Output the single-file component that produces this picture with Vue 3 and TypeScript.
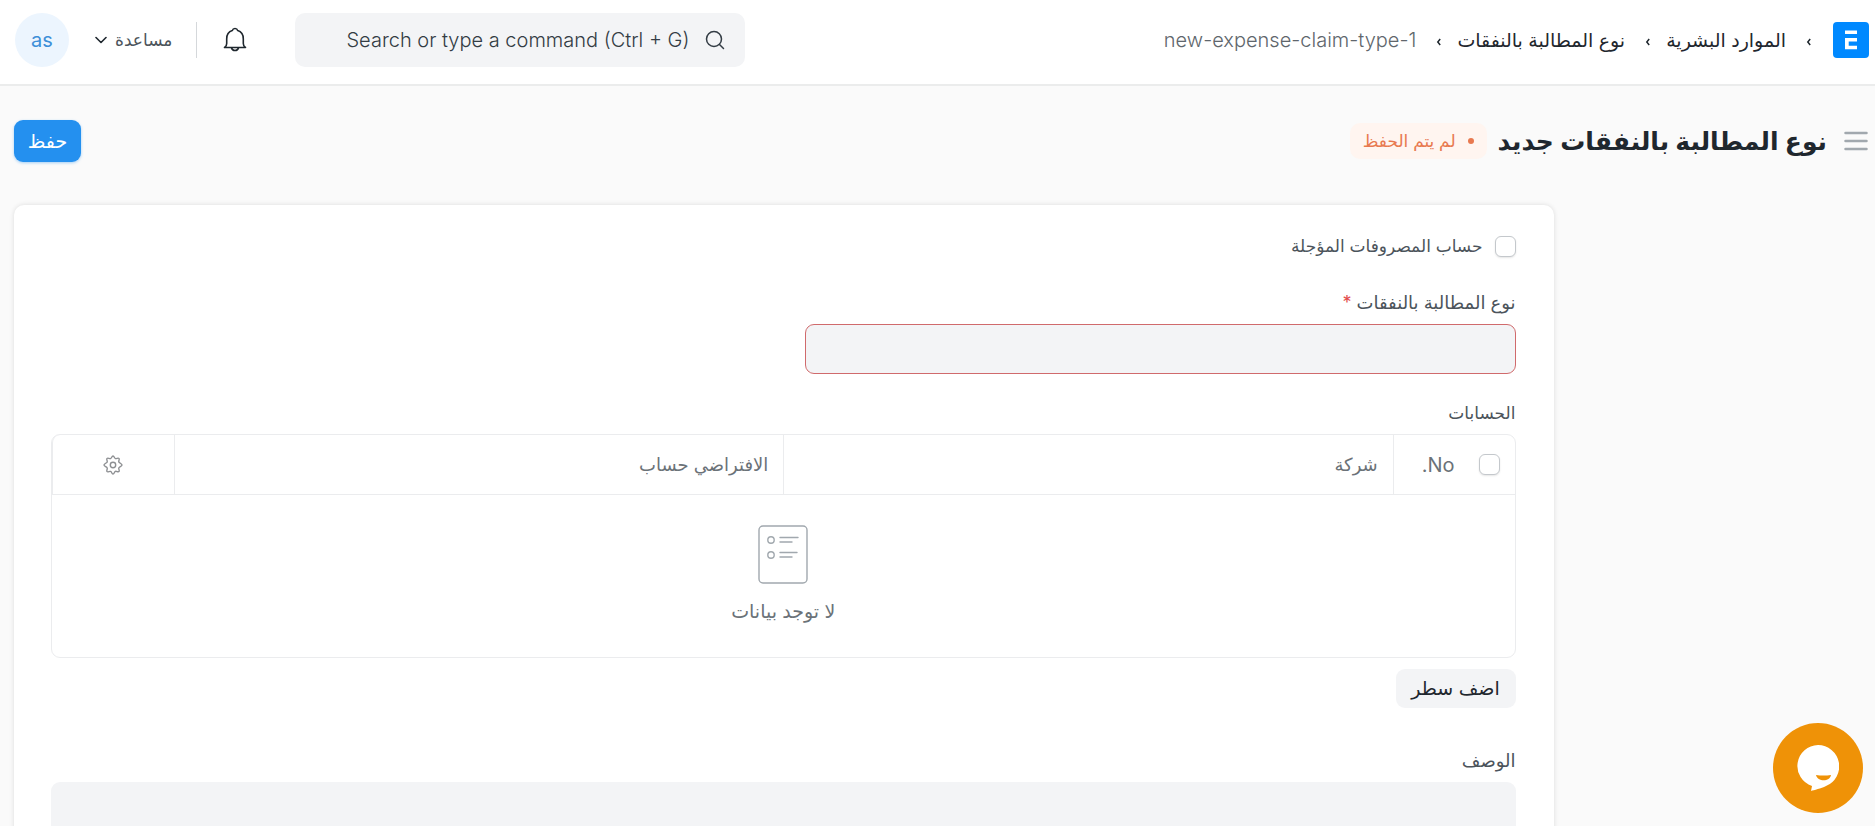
<script setup lang="ts">
import { ref } from 'vue'

interface Crumb {
  label: string
  current?: boolean
}

const crumbs: Crumb[] = [
  { label: 'الموارد البشرية' },
  { label: 'نوع المطالبة بالنفقات' },
  { label: 'new-expense-claim-type-1', current: true },
]

const search = ref('')
const deferred = ref(false)
const expenseType = ref('')
const allRows = ref(false)
const description = ref('')
</script>

<template>
  <div class="page" dir="rtl" lang="ar">
    <header class="navbar">
      <a class="logo" href="#" aria-label="ERPNext">
        <svg viewBox="0 0 36 36" width="36" height="36" aria-hidden="true">
          <rect width="36" height="36" rx="4" fill="#0089ff" />
          <path d="M12 8.500h12v3.500H12zM12 16h12v3.500h-8.300v4.200H24v3.500H12z" fill="#fff" />
        </svg>
      </a>
      <nav class="crumbs">
        <template v-for="crumb in crumbs" :key="crumb.label">
          <svg class="sep" viewBox="0 0 6 8" width="6" height="8" aria-hidden="true">
            <path d="M4.200 1 1.800 4l2.400 3" fill="none" stroke="#1f272e" stroke-width="1.500" />
          </svg>
          <a href="#" :class="{ current: crumb.current }">{{ crumb.label }}</a>
        </template>
      </nav>
      <div class="tools">
        <label class="search">
          <svg viewBox="0 0 20 20" width="20" height="20" aria-hidden="true">
            <g fill="none" stroke="#333c44" stroke-width="1.500">
              <circle cx="9" cy="9" r="7.500" />
              <path d="m14.500 14.500 4 4" stroke-linecap="round" />
            </g>
          </svg>
          <input v-model="search" type="text" placeholder="Search or type a command (Ctrl + G)" aria-label="Search" />
        </label>
        <button class="bell" type="button" aria-label="الإشعارات">
          <svg viewBox="0 0 24 26" width="24" height="26" aria-hidden="true">
            <g fill="none" stroke="#1f272e" stroke-width="1.600" stroke-linecap="round" stroke-linejoin="round">
              <path d="M1.500 20.500h21c-1.500-.8-2.200-2-2.200-4v-4.600c0-4-2.300-7.300-5.600-8.300a2.800 2.800 0 0 0-5.400 0c-3.300 1-5.600 4.300-5.600 8.300v4.600c0 2-.7 3.200-2.200 4z" />
              <path d="M8.500 20.800a3.600 3.600 0 0 0 7 0" />
            </g>
          </svg>
        </button>
        <span class="divider"></span>
        <button class="help" type="button">
          <span>مساعدة</span>
          <svg viewBox="0 0 12 8" width="12" height="8" aria-hidden="true">
            <path d="m1 1.500 5 5 5-5" fill="none" stroke="#1f272e" stroke-width="1.600" stroke-linecap="round" stroke-linejoin="round" />
          </svg>
        </button>
        <button class="avatar" type="button">as</button>
      </div>
    </header>

    <div class="head">
      <button class="menu" type="button" aria-label="القائمة">
        <svg viewBox="0 0 24 20" width="24" height="20" aria-hidden="true">
          <path d="M1.500 2h21M1.500 10h21M1.500 18h21" stroke="#a1a8ae" stroke-width="2.500" stroke-linecap="round" />
        </svg>
      </button>
      <h1>نوع المطالبة بالنفقات جديد</h1>
      <span class="status"><i class="dot"></i>لم يتم الحفظ</span>
      <button class="save" type="button">حفظ</button>
    </div>

    <main class="card">
      <label class="check">
        <input v-model="deferred" type="checkbox" />
        <span>حساب المصروفات المؤجلة</span>
      </label>

      <div class="field half">
        <label for="expense-type">نوع المطالبة بالنفقات <span class="req">*</span></label>
        <input id="expense-type" v-model="expenseType" type="text" required />
      </div>

      <section class="field accounts">
        <span id="accounts-label" class="caption">الحسابات</span>
        <div class="grid">
          <table aria-labelledby="accounts-label">
            <thead>
              <tr>
                <th class="narrow">
                  <div class="num">
                    <input v-model="allRows" type="checkbox" aria-label="تحديد الكل" />
                    <span>No.</span>
                  </div>
                </th>
                <th>شركة</th>
                <th>الافتراضي حساب</th>
                <th class="narrow gear">
                  <button type="button" aria-label="إعدادات">
                    <svg viewBox="0 0 20 20" width="20" height="20" aria-hidden="true">
                      <g fill="none" stroke="#8d8f92" stroke-width="1.400" stroke-linejoin="round">
                        <circle cx="10" cy="10" r="2.700" />
                        <path d="M10 1c1.200 0 1.300 2.200 2.400 2.600s2.700-1.100 3.600-.2-.7 2.400-.2 3.500S19 8.800 19 10s-2.800 1.900-3.200 3 1.100 2.600.2 3.500-2.500-.6-3.600-.1S11.200 19 10 19s-1.300-2.200-2.400-2.600-2.700 1.100-3.600.2.700-2.500.2-3.600S1 11.200 1 10s2.800-2 3.200-3.100S3.100 4.300 4 3.400s2.500.6 3.600.2S8.800 1 10 1z" />
                      </g>
                    </svg>
                  </button>
                </th>
              </tr>
            </thead>
          </table>
          <div class="empty">
            <svg viewBox="0 0 50 60" width="50" height="60" aria-hidden="true">
              <g fill="none" stroke="#a1a8ae" stroke-width="1.400" stroke-linecap="round">
                <rect x="1" y="1" width="48" height="57" rx="4" />
                <circle cx="13" cy="15" r="3.200" />
                <circle cx="13" cy="30" r="3.200" />
                <path d="M22 12.500h18M22 17h12M22 27.500h17M22 32h12" />
              </g>
            </svg>
            <span>لا توجد بيانات</span>
          </div>
        </div>
        <button class="add" type="button">اضف سطر</button>
      </section>

      <div class="field">
        <label for="description">الوصف</label>
        <textarea id="description" v-model="description"></textarea>
      </div>
    </main>

    <button class="chat" type="button" aria-label="محادثة">
      <svg viewBox="0 0 42 46" width="42" height="46" aria-hidden="true">
        <path d="M21 0a21 21 0 0 0-6 41l-1 5c3-1 10-2.500 15-5A21.300 21.300 0 0 0 21 0z" fill="#fff" />
        <path d="M19 30q7.500 1 15 0c-1 7-13.500 7-15 0z" fill="#ef9207" />
      </svg>
    </button>
  </div>
</template>

<style>
html {
  background: #fafafa;
  scrollbar-width: none;
}
</style>

<style scoped>
.page,
.page * {
  box-sizing: border-box;
}

.page {
  min-height: 100vh;
  background: #fafafa;
  color: #1f272e;
  font-family: Inter, "DejaVu Sans", sans-serif;
  font-size: 17px;
}

button,
input,
textarea {
  font: inherit;
  color: inherit;
}

button {
  display: flex;
  align-items: center;
  justify-content: center;
  padding: 0;
  border: 0;
  background: none;
}

a {
  color: inherit;
  text-decoration: none;
}

svg {
  flex: none;
  display: block;
}

.navbar {
  display: flex;
  align-items: center;
  height: 86px;
  padding-bottom: 4px;
  padding-inline: 6px 15px;
  background: #fff;
  border-bottom: 2px solid #ebecec;
}

.crumbs {
  display: flex;
  align-items: center;
  margin-inline-start: 6px;
  font-size: 19px;
}

.sep {
  margin: 4px 15px 0 20px;
}

.crumbs .current {
  font-size: 20px;
  font-weight: 300;
  color: #60666c;
}

.tools {
  display: flex;
  align-items: center;
  margin-inline-start: auto;
}

.search {
  display: flex;
  align-items: center;
  gap: 16px;
  width: 450px;
  height: 54px;
  padding: 0 20px;
  border-radius: 10px;
  background: #f3f4f6;
}

.search input {
  flex: 1;
  min-width: 0;
  padding: 0;
  border: 0;
  outline: 0;
  background: none;
  font-size: 20px;
  font-weight: 300;
}

.search input::placeholder {
  color: #333c44;
  opacity: 1;
}

.bell {
  margin-inline: 48px 26px;
}

.divider {
  width: 1px;
  height: 36px;
  background: #d5d8db;
}

.help {
  gap: 8px;
  margin-inline: 24px 26px;
  color: #4c545b;
}

.avatar {
  width: 54px;
  height: 54px;
  border-radius: 50%;
  background: #ecf5fe;
  color: #3d8fd8;
  font-size: 20px;
}

.head {
  display: flex;
  align-items: center;
  height: 110px;
  padding-inline: 7px 14px;
}

h1 {
  margin: 0;
  margin-inline: 17px 11px;
  font-size: 25px;
  font-weight: 600;
  line-height: 40px;
}

.status {
  display: flex;
  align-items: center;
  gap: 12px;
  height: 36px;
  padding: 0 13px;
  border-radius: 10px;
  background: #fff5f0;
  color: #e8794f;
}

.dot {
  width: 6px;
  height: 6px;
  border-radius: 50%;
  background: currentColor;
}

.save {
  width: 67px;
  height: 42px;
  margin-inline-start: auto;
  border-radius: 9px;
  background: #2490ef;
  box-shadow: 0 1px 3px rgba(36, 144, 239, 0.4);
  color: #fff;
  font-size: 19px;
}

.card {
  width: calc(82% + 2px);
  margin-top: 9px;
  margin-inline: auto 14px;
  padding-block: 30px;
  padding-inline: 38px 37px;
  border-radius: 10px;
  background: #fff;
  box-shadow: 0 0 5px rgba(0, 0, 0, 0.12);
}

.check {
  display: flex;
  align-items: center;
  gap: 12px;
  height: 22px;
  margin-bottom: 34px;
  color: #4c545b;
}

input[type='checkbox'] {
  appearance: none;
  flex: none;
  width: 21px;
  height: 21px;
  margin: 0;
  border: 1px solid #c4c8cc;
  border-radius: 6px;
  background: #fff;
  box-shadow: 0 1px 2px rgba(0, 0, 0, 0.1);
}

.field {
  display: flex;
  flex-direction: column;
}

.field > label,
.caption {
  height: 33px;
  line-height: 24px;
  color: #4c545b;
}

.field > label {
  font-size: 18px;
}

.req {
  color: #e24c4c;
}

.half {
  width: calc(50% - 22px);
  margin-bottom: 27px;
}

.half input {
  height: 50px;
  padding: 0 12px;
  border: 1px solid #d06a6c;
  border-radius: 9px;
  background: #f3f4f6;
}

.accounts {
  margin-bottom: 41px;
}

.grid {
  margin-bottom: 11px;
  border: 1px solid #ebecee;
  border-radius: 9px;
}

table {
  width: 100%;
  table-layout: fixed;
  border-collapse: separate;
  border-spacing: 0;
}

th {
  height: 60px;
  padding: 0 15px;
  border-bottom: 1px solid #ebecee;
  border-left: 1px solid #ebecee;
  color: #6b7278;
  font-size: 18px;
  font-weight: 400;
  text-align: start;
}

.narrow {
  width: 8.333%;
}

.gear {
  border-top-left-radius: 8px;
}

.num {
  display: flex;
  align-items: center;
  gap: 24px;
  font-size: 20px;
}

.gear button {
  margin: auto;
}

.empty {
  display: flex;
  flex-direction: column;
  align-items: center;
  gap: 13px;
  height: 162px;
  padding-top: 30px;
  color: #6b7278;
  font-size: 19px;
  line-height: 28px;
}

.add {
  width: 120px;
  height: 39px;
  border-radius: 9px;
  background: #f3f4f6;
  font-size: 19px;
}

textarea {
  height: 360px;
  padding: 12px;
  border: 0;
  border-radius: 9px;
  background: #f3f4f6;
  resize: none;
}

.chat {
  position: fixed;
  right: 12px;
  bottom: 13px;
  width: 90px;
  height: 90px;
  border-radius: 50%;
  background: #ef9207;
}
</style>
